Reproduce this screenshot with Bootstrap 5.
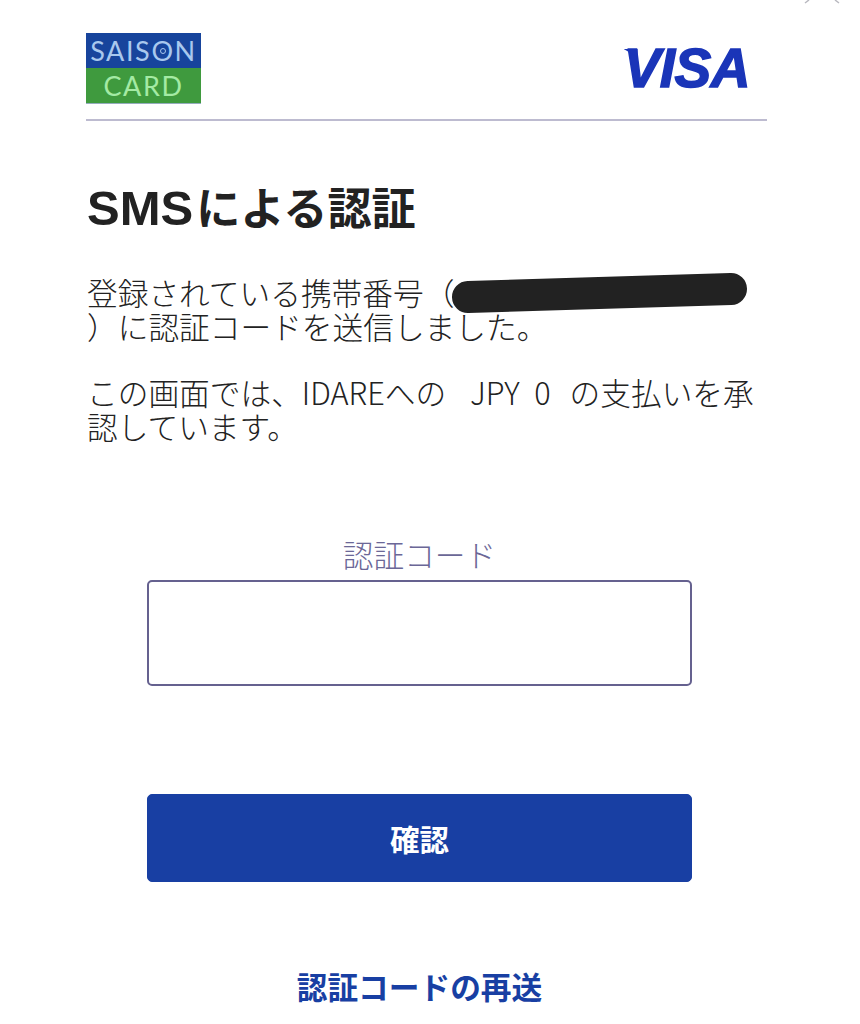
<!DOCTYPE html>
<html lang="ja">
<head>
  <meta charset="UTF-8" />
  <meta name="viewport" content="width=device-width, initial-scale=1.0"/>
  <title>SMSによる認証</title>
  <link href="https://cdn.jsdelivr.net/npm/bootstrap@5.3.3/dist/css/bootstrap.min.css" rel="stylesheet"/>
  <style>
    body {
      background-color: #fff;
      color: #222;
      font-family: "Noto Sans CJK JP", "Liberation Sans", sans-serif;
      font-size: 30.7px;
      line-height: 33.5px;
      font-weight: 300;
    }
    .acs-page { width: 681px; margin-left: 86px; padding-top: 33px; }
    .acs-head { height: 88px; border-bottom: 2px solid #bdbbd0; }
    .logo-saison { width: 115px; height: 71px; font-family: "Lato", sans-serif; font-size: 27px; font-weight: 400; line-height: 1; box-shadow: inset 0 0 0 1px rgba(20, 70, 110, .45); }
    .logo-saison-top { height: 35px; background-color: #17449c; color: #a9c8ee; letter-spacing: 1.6px; }
    .logo-saison-bottom { height: 35px; margin-bottom: 1px; background-color: #3f9a3e; color: #a4eaa4; letter-spacing: 1.6px; }
    .logo-ring { position: relative; }
    .logo-ring::after { content: ""; position: absolute; left: 50%; top: 50%; width: 6px; height: 6px; margin: -3px 0 0 -3px; border: 1px solid #a9c8ee; border-radius: 50%; }
    .logo-visa { position: relative; color: #1a35b8; font-size: 55px; font-weight: 700; font-style: italic; font-family: "Liberation Sans", sans-serif; line-height: 1; margin: 8px 17px 0 0; letter-spacing: -.5px; -webkit-text-stroke: 1.5px #1a35b8; }
    .logo-visa::before { content: ""; position: absolute; left: 0; top: 8px; width: 14px; height: 8px; background-color: #1a35b8; clip-path: polygon(0 0, 100% 0, 100% 100%); }
    .acs-title { font-size: 44.2px; font-weight: 700; line-height: 50px; margin: 60px 0 0 1px; color: #222; }
    .title-latin { font-family: "Liberation Sans", sans-serif; font-size: 49px; margin-right: 3px; }
    .acs-text { position: relative; margin: 42px 0 0 1px; width: 672px; }
    .acs-text p { margin-bottom: 33px; word-spacing: 8px; }
    .amount { margin: 0 4px 0 9px; }
    .redact { position: absolute; left: 364px; top: -3px; width: 298px; height: 44px; }
    .code-block { width: 545px; margin: 94px 0 0 61px; }
    .code-label { color: #6b6797; line-height: 36px; margin-bottom: 8px; }
    .code-input { height: 106px; border: 2px solid #65618f; border-radius: 5px; }
    .btn-confirm { width: 545px; height: 88px; margin: 108px 0 0 61px; background-color: #183fa3; border-color: #183fa3; color: #fff; font-size: 29.5px; font-weight: 700; border-radius: 5px; }
    .resend { color: #183fa3; font-size: 30.7px; font-weight: 700; text-decoration: none; }
    .resend-row { width: 545px; margin: 87px 0 0 61px; }
    .close-mark { position: absolute; top: 0; left: 804px; width: 36px; height: 4px; }
  </style>
</head>
<body>
  <svg class="close-mark" viewBox="0 0 36 4"><path d="M1 3 5 0M31 0 35 3" stroke="#b9b9c0" stroke-width="1.5" fill="none"/></svg>
  <div class="acs-page">
    <div class="acs-head d-flex justify-content-between align-items-start">
      <div class="logo-saison text-center overflow-hidden">
        <div class="logo-saison-top d-flex align-items-center justify-content-center">SAIS<span class="logo-ring">O</span>N</div>
        <div class="logo-saison-bottom d-flex align-items-center justify-content-center">CARD</div>
      </div>
      <div class="logo-visa">VISA</div>
    </div>
    <h1 class="acs-title"><span class="title-latin">SMS</span>による認証</h1>
    <div class="acs-text">
      <p>登録されている携帯番号（<br>）に認証コードを送信しました。</p>
      <p>この画面では、IDAREへの <span class="amount">JPY 0</span> の支払いを承認しています。</p>
      <svg class="redact" viewBox="0 0 298 44"><path d="M17 25 280 17" stroke="#222" stroke-width="32" stroke-linecap="round"/></svg>
    </div>
    <div class="code-block text-center">
      <div class="code-label">認証コード</div>
      <div class="code-input bg-white"></div>
    </div>
    <button type="button" class="btn btn-confirm d-block">確認</button>
    <div class="resend-row text-center"><a href="#" class="resend">認証コードの再送</a></div>
  </div>
  <script src="https://cdn.jsdelivr.net/npm/bootstrap@5.3.3/dist/js/bootstrap.bundle.min.js"></script>
</body>
</html>
